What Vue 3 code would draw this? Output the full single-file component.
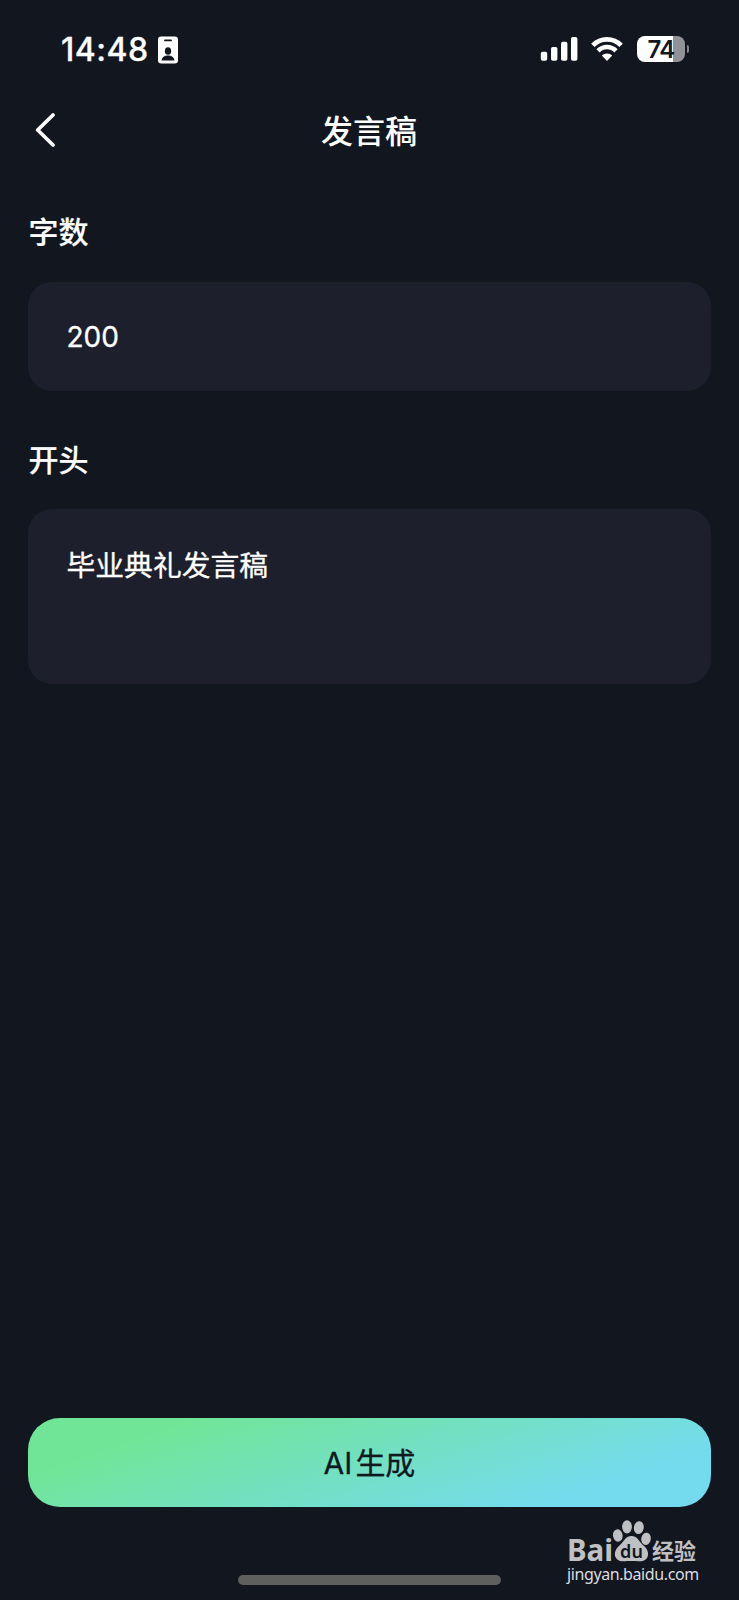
<script setup>
import { ref } from 'vue'

const title = '发言稿'
const fields = ref([
  { label: '字数', value: '200', kind: 'short' },
  { label: '开头', value: '毕业典礼发言稿', kind: 'long' },
])
</script>

<template>
  <div class="screen">
    <header class="status">
      <div class="clock">
        <span class="time">14:48</span>
        <svg class="badge-icon" width="20" height="28" viewBox="0 0 20 28">
          <rect x="0" y="0.5" width="20" height="27" rx="3.2" fill="#fff" />
          <rect x="6" y="3.4" width="8" height="1.8" rx="0.9" fill="#12161f" />
          <ellipse cx="10" cy="15" rx="3.2" ry="3.8" fill="#12161f" />
          <path d="M3.6 24.4c.3-3.3 2.900-4.900 6.400-4.900s6.100 1.600 6.400 4.900z" fill="#12161f" />
        </svg>
      </div>
      <div class="indicators">
        <svg width="38" height="26" viewBox="0 0 38 26" fill="#fff">
          <rect x="0.8" y="15.8" width="6.4" height="9" rx="1.8" />
          <rect x="11" y="11" width="6.4" height="13.8" rx="1.8" />
          <rect x="21" y="5.8" width="6.4" height="19" rx="1.8" />
          <rect x="31" y="1" width="6.4" height="23.8" rx="1.8" />
        </svg>
        <svg class="wifi" width="32" height="26" viewBox="0 0 32 26" fill="none" stroke="#fff">
          <path d="M1.9 9.3C9.6 1.3 22.4 1.3 30.1 9.3" stroke-width="4.8" />
          <path d="M7 14.9C12 9.7 20 9.7 25 14.9" stroke-width="4.6" />
          <path d="M16 25L10.8 19.5C13.6 16.700 18.4 16.700 21.2 19.5Z" fill="#fff" stroke="none" />
        </svg>
        <div class="battery">
          <div class="cell">74</div>
          <i class="tip"></i>
        </div>
      </div>
    </header>

    <nav class="nav">
      <svg class="back" width="20" height="34" viewBox="0 0 20 34" fill="none">
        <path d="M18 2L2.7 17L18 32" stroke="#fff" stroke-width="3.7" stroke-linecap="round" stroke-linejoin="round" />
      </svg>
      <h1>{{ title }}</h1>
    </nav>

    <main class="form">
      <section v-for="field in fields" :key="field.label" class="field">
        <h2>{{ field.label }}</h2>
        <div class="box" :class="field.kind">{{ field.value }}</div>
      </section>
    </main>

    <button class="generate"><span class="latin">AI</span><span>生成</span></button>

    <footer class="bottom">
      <div class="home"></div>
      <div class="watermark">
        <div class="brand">
          <span class="bai">Bai</span>
          <span class="paw">
            <svg width="40" height="42" viewBox="0 0 40 42" fill="#bfc0c3">
              <ellipse cx="5.8" cy="15.5" rx="4.8" ry="6.2" transform="rotate(-10 5.8 15.5)" />
              <ellipse cx="15" cy="6.8" rx="4.9" ry="6.6" />
              <ellipse cx="26.8" cy="7.6" rx="4.9" ry="6.4" transform="rotate(10 26.8 7.6)" />
              <ellipse cx="34" cy="18.8" rx="4.8" ry="6.2" transform="rotate(10 34 18.8)" />
              <path d="M19.5 16C26 16 27 22 31.5 25.5C35.5 28.5 37.5 34 35 38C32 42 27 41.4 24 41H15C11 41.4 7 42 4 38C1.5 34 3.5 28.5 7.5 25.5C12 22 13 16 19.5 16Z" />
            </svg>
            <b>du</b>
          </span>
          <span class="jy">经验</span>
        </div>
        <div class="url">jingyan.baidu.com</div>
      </div>
    </footer>
  </div>
</template>

<style>
body {
  background: #12161f;
}
</style>

<style scoped>
.screen {
  box-sizing: border-box;
  width: 739px;
  height: 1600px;
  overflow: hidden;
  display: flex;
  flex-direction: column;
  background: #12161f;
  color: #fff;
  font-family: Inter, "Noto Sans CJK SC", sans-serif;
}
.status {
  height: 98px;
  box-sizing: border-box;
  padding: 0 50px 0 61px;
  display: flex;
  justify-content: space-between;
}
.clock {
  display: flex;
  align-items: center;
  height: 99px;
}
.time {
  width: 97px;
  font-size: 32px;
  font-weight: 500;
  letter-spacing: 0.5px;
  white-space: nowrap;
  -webkit-text-stroke: 0.3px #fff;
}
.indicators {
  display: flex;
  align-items: center;
  height: 98px;
}
.wifi {
  margin: 0 14px 0 13px;
}
.battery {
  display: flex;
  align-items: center;
  gap: 2px;
}
.cell {
  width: 48px;
  height: 26px;
  border-radius: 8px;
  background: linear-gradient(90deg, #fff 75%, #919297 75%);
  color: #12161f;
  font-size: 24px;
  font-weight: 600;
  line-height: 27px;
  text-align: center;
  letter-spacing: -0.8px;
}
.tip {
  width: 2px;
  height: 8px;
  border-radius: 0 3px 3px 0;
  background: #85868b;
}
.nav {
  height: 66px;
  display: grid;
  grid-template-columns: 1fr auto 1fr;
  align-items: center;
}
.back {
  margin: -3px 0 0 35px;
}
h1 {
  margin: 2px 1px 0 0;
  font-size: 32px;
  font-weight: 500;
  line-height: 64px;
}
.form {
  padding: 46px 28px 0;
}
.field + .field {
  margin-top: 47px;
}
h2 {
  margin: 0 0 28px;
  padding-left: 0.5px;
  font-size: 30px;
  font-weight: 500;
  line-height: 44px;
  -webkit-text-stroke: 0.2px #fff;
}
.field + .field h2 {
  margin-bottom: 27px;
}
.box {
  box-sizing: border-box;
  padding: 33px 38.5px;
  border-radius: 24px;
  background: #1d1f2d;
  font-size: 28.8px;
  line-height: 44px;
  -webkit-text-stroke: 0.3px #fff;
}
.short {
  height: 109px;
  font-size: 28px;
}
.long {
  height: 175px;
  padding-top: 35px;
}
.generate {
  margin: auto 28px 0;
  padding: 0;
  flex: none;
  height: 89px;
  border: 0;
  border-radius: 32px;
  background: linear-gradient(161deg, #71e597 18%, #74dbee 82%);
  color: #10191e;
  font-family: inherit;
  font-size: 30px;
  font-weight: 400;
  line-height: 44px;
  -webkit-text-stroke: 0.3px #10191e;
  display: flex;
  align-items: center;
  justify-content: center;
  gap: 3px;
}
.bottom {
  height: 93px;
  flex: none;
  position: relative;
}
.home {
  width: 263.5px;
  height: 10px;
  margin: 68px auto 0;
  border-radius: 5px;
  background: #5f5f5e;
}
.watermark {
  position: absolute;
  left: 567px;
  top: 13px;
  color: #bfc0c3;
}
.brand {
  display: flex;
  align-items: flex-end;
  height: 42px;
}
.bai {
  width: 45px;
  font-family: "Noto Sans", sans-serif;
  font-size: 29.5px;
  font-weight: 700;
  line-height: 24px;
}
.paw {
  display: block;
  width: 40px;
  height: 42px;
  position: relative;
}
.paw b {
  position: absolute;
  left: 0;
  width: 39px;
  bottom: 1px;
  text-align: center;
  color: #12161f;
  font-family: "Noto Sans", sans-serif;
  font-size: 18px;
  font-weight: 600;
  line-height: 20px;
}
.jy {
  font-size: 22px;
  font-weight: 700;
  line-height: 22px;
  white-space: nowrap;
}
.url {
  margin-top: 2px;
  font-family: "Noto Sans", sans-serif;
  font-size: 16px;
  line-height: 20px;
  letter-spacing: -0.4px;
  white-space: nowrap;
  color: #dcdde0;
}
</style>
